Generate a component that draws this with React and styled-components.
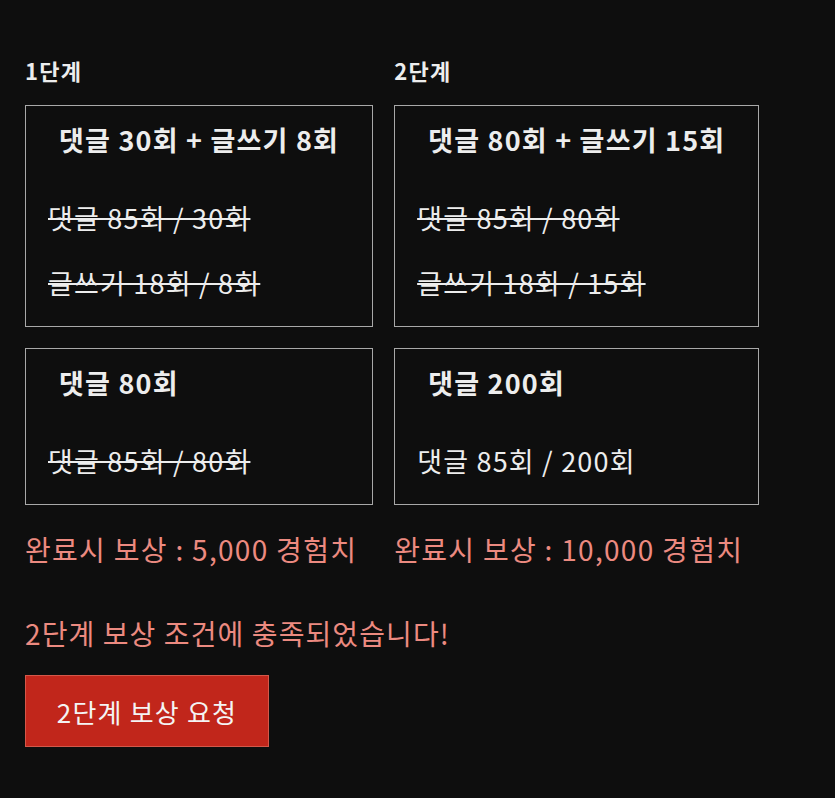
import React from 'react';
import styled, { createGlobalStyle } from 'styled-components';

const stages = [
    {
        label: '1단계',
        reward: '완료시 보상 : 5,000 경험치',
        missions: [
            {
                title: '댓글 30회 + 글쓰기 8회',
                rows: [
                    { text: '댓글 85회 / 30회', done: true },
                    { text: '글쓰기 18회 / 8회', done: true },
                ],
            },
            {
                title: '댓글 80회',
                rows: [{ text: '댓글 85회 / 80회', done: true }],
            },
        ],
    },
    {
        label: '2단계',
        reward: '완료시 보상 : 10,000 경험치',
        missions: [
            {
                title: '댓글 80회 + 글쓰기 15회',
                rows: [
                    { text: '댓글 85회 / 80회', done: true },
                    { text: '글쓰기 18회 / 15회', done: true },
                ],
            },
            {
                title: '댓글 200회',
                rows: [{ text: '댓글 85회 / 200회', done: false }],
            },
        ],
    },
];

function App() {
    const handleRequest = () => {
        // 보상 요청 보내는 부분
        console.log();
    };

    return (
        <>
            <GlobalStyle />
            <PageWrapper>
                <StageGrid>
                    {stages.map((stage) => (
                        <StageColumn key={stage.label}>
                            <StageLabel>{stage.label}</StageLabel>
                            <BoxList>
                                {stage.missions.map((mission) => (
                                    <MissionBox key={mission.title}>
                                        <MissionTitle>{mission.title}</MissionTitle>
                                        {mission.rows.map((row) => (
                                            <MissionRow key={row.text} $done={row.done}>
                                                {row.text}
                                            </MissionRow>
                                        ))}
                                    </MissionBox>
                                ))}
                            </BoxList>
                            <RewardText>{stage.reward}</RewardText>
                        </StageColumn>
                    ))}
                </StageGrid>
                <NoticeText>2단계 보상 조건에 충족되었습니다!</NoticeText>
                <RequestBtn onClick={handleRequest}>2단계 보상 요청</RequestBtn>
            </PageWrapper>
        </>
    );
}

const GlobalStyle = createGlobalStyle`
    html, body {
        margin: 0;
        background: #0e0e0e;
    }
    body {
        font-family: 'Noto Sans CJK KR', 'Noto Sans', sans-serif;
        color: #ededed;
    }
`;

const PageWrapper = styled.div`
    min-height: 798px;
    box-sizing: border-box;
    padding: 52px 25px 0 25px;
`;

const StageGrid = styled.div`
    display: flex;
    flex-direction: row;
    align-items: flex-start;
    gap: 21px;
`;

const StageColumn = styled.div`
    display: flex;
    flex-direction: column;
    align-items: stretch;
`;

const StageLabel = styled.div`
    font-size: 22px;
    font-weight: 700;
    line-height: 36px;
    letter-spacing: 1.3px;
    margin-bottom: 17px;
`;

const BoxList = styled.div`
    display: flex;
    flex-direction: column;
    gap: 21px;
`;

const MissionBox = styled.div`
    border: 1px solid #a8a8a8;
    padding: 9px 0 11px 0;
`;

const MissionTitle = styled.div`
    font-size: 27px;
    font-weight: 700;
    line-height: 50px;
    letter-spacing: 1.2px;
    padding: 0 33px 0 33px;
    margin-bottom: 20px;
    white-space: nowrap;
`;

const MissionRow = styled.div`
    font-size: 27px;
    font-weight: 400;
    line-height: 65px;
    letter-spacing: 1.2px;
    padding-left: 22px;
    white-space: nowrap;
    text-decoration: ${(props) => (props.$done ? 'line-through' : 'none')};
    text-decoration-thickness: 2px;
`;

const RewardText = styled.div`
    font-size: 28px;
    font-weight: 400;
    line-height: 40px;
    letter-spacing: 1.3px;
    margin-top: 24px;
    color: #ec8a80;
    white-space: nowrap;
`;

const NoticeText = styled.div`
    font-size: 28px;
    font-weight: 400;
    line-height: 40px;
    letter-spacing: 1.1px;
    margin-top: 44px;
    color: #ec8a80;
`;

const RequestBtn = styled.div`
    display: inline-flex;
    align-items: center;
    justify-content: center;
    box-sizing: border-box;
    width: 244px;
    height: 72px;
    margin-top: 22px;
    background: #c1261b;
    border: 1px solid #d4584a;
    color: #f4f4f4;
    font-size: 26px;
    letter-spacing: 1.2px;
    cursor: pointer;
`;

export default App;
